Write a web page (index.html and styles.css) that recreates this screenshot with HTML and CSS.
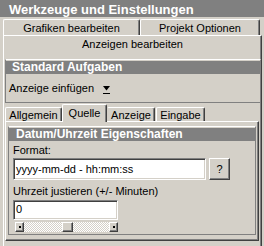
FILE: index.html
```html
<!DOCTYPE html>
<html>
<head>
<meta charset="utf-8">
<link rel="stylesheet" href="styles.css">
</head>
<body>
<div class="title">Werkzeuge und Einstellungen</div>
<div class="tabrow1">
  <div class="tab t-graf">Grafiken bearbeiten</div>
  <div class="tab t-proj">Projekt Optionen</div>
</div>
<div class="main">
  <div class="seltab">Anzeigen bearbeiten</div>
  <div class="group g-std">
    <div class="ghead">Standard Aufgaben</div>
    <div class="gbody">
      <span>Anzeige einfügen</span>
      <svg class="drop" width="7" height="9" viewBox="0 0 7 9"><polygon points="0,0 7,0 3.5,4.5" fill="#000"/><rect x="0" y="7" width="7" height="1" fill="#000"/></svg>
    </div>
  </div>
  <div class="tabrow2">
    <div class="tab2 w-allg">Allgemein</div>
    <div class="tab2 sel w-quel">Quelle</div>
    <div class="tab2 w-anz">Anzeige</div>
    <div class="tab2 w-ein">Eingabe</div>
  </div>
  <div class="inner">
    <div class="group g-dat">
      <div class="ghead hd2">Datum/Uhrzeit Eigenschaften</div>
      <div class="dbody">
        <div class="lbl l1">Format:</div>
        <div class="row">
          <div class="input wide">yyyy-mm-dd - hh:mm:ss</div>
          <div class="btn">?</div>
        </div>
        <div class="lbl l2">Uhrzeit justieren (+/- Minuten)</div>
        <div class="input narrow">0</div>
        <div class="scroll">
          <div class="sbtn"><i></i></div>
          <div class="track"><div class="thumb"></div></div>
          <div class="sbtn"><i></i></div>
        </div>
      </div>
    </div>
  </div>
</div>
</body>
</html>
```
FILE: styles.css
```css
* { box-sizing: border-box; }
body {
  margin: 0;
  width: 264px;
  height: 246px;
  overflow: hidden;
  background: #d4d0c8;
  color: #000;
  font: 11px "Liberation Sans", Arial, sans-serif;
}
.title {
  height: 17px;
  padding: 3px 0 0 9px;
  line-height: 14px;
  font-weight: bold;
  font-size: 13px;
  color: #fff;
  background: #808080;
}
.tabrow1 {
  display: flex;
  margin-top: 2px;
  padding-left: 3px;
  height: 16px;
}
.tab {
  height: 16px;
  padding-top: 1px;
  line-height: 14px;
  text-align: center;
  border-top: 1px solid #fff;
  border-left: 1px solid #fff;
  border-right: 1px solid #404040;
  border-radius: 2px 2px 0 0;
  box-shadow: inset -1px 0 #808080;
}
.t-graf { width: 137px; }
.t-proj { width: 120px; }
.main {
  margin-left: 3px;
  width: 259px;
  height: 211px;
  border-top: 1px solid #fff;
  border-left: 1px solid #fff;
  border-right: 1px solid #404040;
  box-shadow: inset -1px 0 #808080;
}
.seltab {
  height: 17px;
  line-height: 17px;
  text-align: center;
}
.group {
  border: 1px solid #808080;
  border-top-color: #fff;
  padding-top: 1px;
}
.g-std {
  margin: 6px 0 0 1px;
  width: 256px;
}
.ghead {
  height: 13px;
  line-height: 13px;
  padding-left: 6px;
  background: #808080;
  color: #fff;
  font-weight: bold;
  font-size: 12px;
  white-space: nowrap;
}
.gbody {
  height: 28px;
  display: flex;
  align-items: center;
  padding-left: 3px;
  line-height: 13px;
}
.drop {
  margin-left: 9px;
  margin-top: 5px;
}
.tabrow2 {
  display: flex;
  align-items: flex-end;
  margin-top: 1px;
  padding-left: 1px;
  height: 17px;
  position: relative;
  z-index: 1;
}
.tab2 {
  height: 14px;
  padding-top: 1px;
  line-height: 13px;
  text-align: center;
  border-top: 1px solid #fff;
  border-left: 1px solid #fff;
  border-right: 1px solid #404040;
  border-radius: 2px 2px 0 0;
  box-shadow: inset -1px 0 #808080;
  background: #d4d0c8;
}
.tab2.sel {
  height: 18px;
  padding-top: 2px;
  margin-bottom: -1px;
  position: relative;
  z-index: 2;
}
.w-allg { width: 57px; }
.w-quel { width: 45px; }
.w-anz { width: 48px; border-left-color: #d4d0c8; }
.w-ein { width: 49px; margin-left: 1px; }
.inner {
  margin-left: 1px;
  width: 254px;
  height: 120px;
  border: 1px solid #fff;
  border-right-color: #404040;
  border-bottom-color: #404040;
  box-shadow: inset -1px -1px #808080;
  padding: 4px 0 0 2px;
}
.g-dat {
  width: 248px;
  height: 109px;
}
.hd2 { padding-left: 7px; }
.dbody {
  padding-left: 4px;
}
.lbl {
  line-height: 13px;
  white-space: nowrap;
}
.l1 { margin-top: 3px; }
.l2 { margin-top: 5px; }
.row {
  display: flex;
  margin-top: 1px;
}
.input {
  background: #fff;
  border: 1px solid;
  border-color: #808080 #fff #fff #808080;
  box-shadow: inset 1px 1px #404040, inset -1px -1px #d4d0c8;
  padding-left: 2px;
  white-space: nowrap;
}
.wide {
  width: 193px;
  height: 22px;
  line-height: 20px;
}
.narrow {
  margin-top: 2px;
  width: 105px;
  height: 20px;
  line-height: 16px;
}
.btn {
  margin-left: 3px;
  width: 21px;
  height: 22px;
  line-height: 20px;
  text-align: center;
  border: 1px solid;
  border-color: #fff #404040 #404040 #fff;
  box-shadow: inset -1px -1px #808080;
}
.scroll {
  margin: 2px 0 0 2px;
  width: 103px;
  height: 10px;
  display: flex;
}
.sbtn {
  width: 9px;
  height: 10px;
  border: 1px solid;
  border-color: #fff #404040 #404040 #fff;
  box-shadow: inset -1px -1px #808080;
  background: #d4d0c8;
  display: flex;
  align-items: center;
  justify-content: center;
}
.sbtn i {
  display: block;
  width: 2px;
  height: 2px;
  background: #000;
}
.track {
  flex: 1;
  background: repeating-conic-gradient(#fff 0 25%, #d4d0c8 0 50%) 0 0 / 2px 2px;
  padding-left: 38px;
}
.thumb {
  width: 11px;
  height: 10px;
  border: 1px solid;
  border-color: #fff #404040 #404040 #fff;
  box-shadow: inset -1px -1px #808080;
  background: #d4d0c8;
}
```
